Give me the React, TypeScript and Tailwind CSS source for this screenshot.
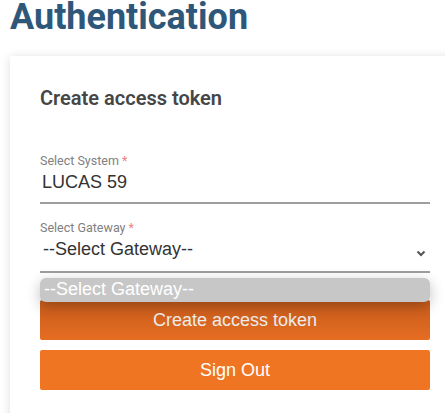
import * as React from "react";

export default function App() {
  return (
    <div className="min-h-[413px] bg-white overflow-hidden" style={{ fontFamily: "Roboto, sans-serif" }}>
      <h1 className="ml-[10px] mt-[-1px] text-[36px] leading-[36px] font-bold text-[#2e5779]">
        Authentication
      </h1>

      <div className="ml-[10px] mt-[21px] w-[480px] bg-white shadow-[0_1px_10px_rgba(0,0,0,0.13)] pl-[30px] pr-[50px] pt-[30px] pb-[40px]">
        <h2 className="text-[20px] leading-[24px] font-semibold text-[#464646]">Create access token</h2>

        <div className="mt-[43px] w-[390px]">
          <div className="text-[12.5px] leading-[16px] text-[#808080]">
            Select System <span className="text-[#f08080]">*</span>
          </div>
          <div
            className="mt-[1px] pl-[2px] pb-[8px] text-[18px] leading-[24px] text-[#333] border-b-2 border-[#9e9e9e]"
            style={{ fontFamily: '"Liberation Sans", Arial, sans-serif' }}
          >
            LUCAS 59
          </div>
        </div>

        <div className="relative mt-[16px] w-[390px]">
          <div className="text-[12.5px] leading-[16px] text-[#808080]">
            Select Gateway <span className="text-[#f08080]">*</span>
          </div>
          <div
            className="mt-[1px] pl-[3px] pb-[10px] flex items-start justify-between text-[18px] leading-[24px] text-[#333] border-b-2 border-[#9e9e9e]"
            style={{ fontFamily: '"Liberation Sans", Arial, sans-serif' }}
          >
            <span>--Select Gateway--</span>
            <svg width="10" height="7" viewBox="0 0 10 7" className="mr-[4px] mt-[13px]">
              <path d="M1.5 1.5 L5 5 L8.5 1.5" fill="none" stroke="#555" strokeWidth="2" />
            </svg>
          </div>

          <div
            className="absolute left-0 right-0 top-full mt-[5px] z-10 h-[24px] rounded-[6px] bg-[#c7c7c7] pl-[4px] text-[18px] leading-[22px] text-white shadow-[0_4px_14px_rgba(0,0,0,0.25)]"
            style={{ fontFamily: '"Liberation Sans", Arial, sans-serif' }}
          >
            --Select Gateway--
          </div>
        </div>

        <div className="w-[390px] mt-[27px] flex flex-col gap-[10px]" style={{ fontFamily: '"Liberation Sans", Arial, sans-serif' }}>
          <button className="h-[40px] rounded-[2px] bg-gradient-to-b from-[#c75b1c] to-[#e56d21] text-[18px] text-[#ececec]">
            Create access token
          </button>
          <button className="h-[40px] rounded-[2px] bg-[#f07522] text-[18px] text-white">Sign Out</button>
        </div>
      </div>
    </div>
  );
}
